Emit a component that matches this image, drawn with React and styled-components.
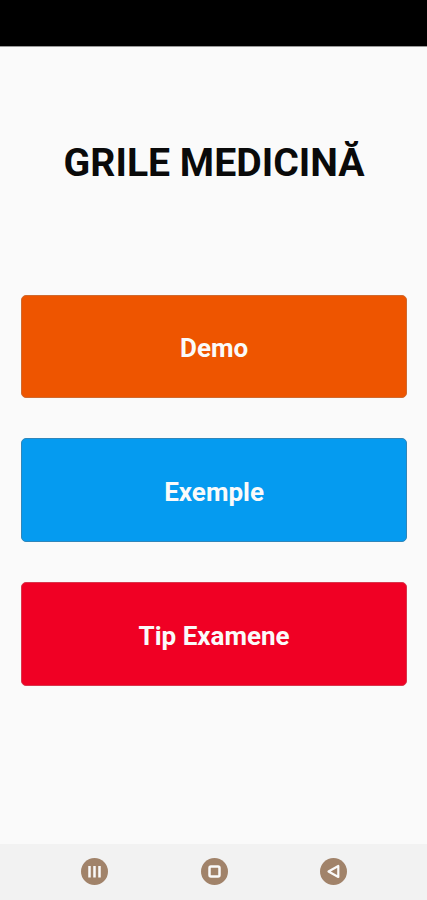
import React from 'react';
import styled, { createGlobalStyle } from 'styled-components';

const Global = createGlobalStyle`
  * { box-sizing: border-box; }
  body { margin: 0; background: #fafafa; font-family: Roboto, "Liberation Sans", sans-serif; }
`;
const Screen = styled.div`
  display: flex;
  flex-direction: column;
  height: 900px;
  background: #fafafa;
`;
const StatusBar = styled.div`
  height: 47px;
  background: #000;
  border-bottom: 1px solid #999;
`;
const Content = styled.main`
  flex: 1;
  display: flex;
  flex-direction: column;
  padding: 92px 19.6px 0 20.8px;
`;
const Title = styled.h1`
  margin: 0 0 107.6px;
  height: 48px;
  line-height: 48px;
  font-size: 39.2px;
  font-weight: 700;
  text-align: center;
  white-space: nowrap;
  color: #0a0a0a;
`;
const Menu = styled.div`
  display: flex;
  flex-direction: column;
  gap: 40px;
`;
const MenuButton = styled.button`
  height: 103.8px;
  padding: 3.4px 0 0;
  border: 1px solid ${(p) => p.$edge};
  border-radius: 5px;
  background: ${(p) => p.$color};
  color: #fafafa;
  font: 700 26px Roboto, "Liberation Sans", sans-serif;
`;
const NavBar = styled.nav`
  height: 56px;
  background: #f2f2f2;
  display: flex;
  justify-content: center;
  padding: 14px 0 0 1px;
  gap: 92.5px;
`;
const NavButton = styled.button`
  width: 27px;
  height: 27px;
  padding: 0;
  border: 0;
  border-radius: 50%;
  background: #a1836a;
  svg { display: block; }
`;

const items = [
  { label: 'Demo', color: '#ee5500', edge: '#cf6a30' },
  { label: 'Exemple', color: '#059bf0', edge: '#2f86ba' },
  { label: 'Tip Examene', color: '#f00024', edge: '#d8364c' },
];
const icons = [
  { name: 'Recents', width: 2.5, shape: <path d="M8.5 8v11.5M13.5 8v11.5M18.5 8v11.5" /> },
  { name: 'Home', width: 2.5, shape: <rect x="8.5" y="8.5" width="10" height="10" rx="1.5" /> },
  { name: 'Back', width: 2.2, shape: <path d="M18.3 8v11l-9.8-5.5z" /> },
];

export default function App() {
  return (
    <Screen>
      <Global />
      <StatusBar />
      <Content>
        <Title>GRILE MEDICINĂ</Title>
        <Menu>
          {items.map((i) => (
            <MenuButton key={i.label} $color={i.color} $edge={i.edge}>{i.label}</MenuButton>
          ))}
        </Menu>
      </Content>
      <NavBar>
        {icons.map((i) => (
          <NavButton key={i.name} aria-label={i.name}>
            <svg width="27" height="27" fill="none" stroke="#fafafa" strokeWidth={i.width} strokeLinejoin="round">{i.shape}</svg>
          </NavButton>
        ))}
      </NavBar>
    </Screen>
  );
}
